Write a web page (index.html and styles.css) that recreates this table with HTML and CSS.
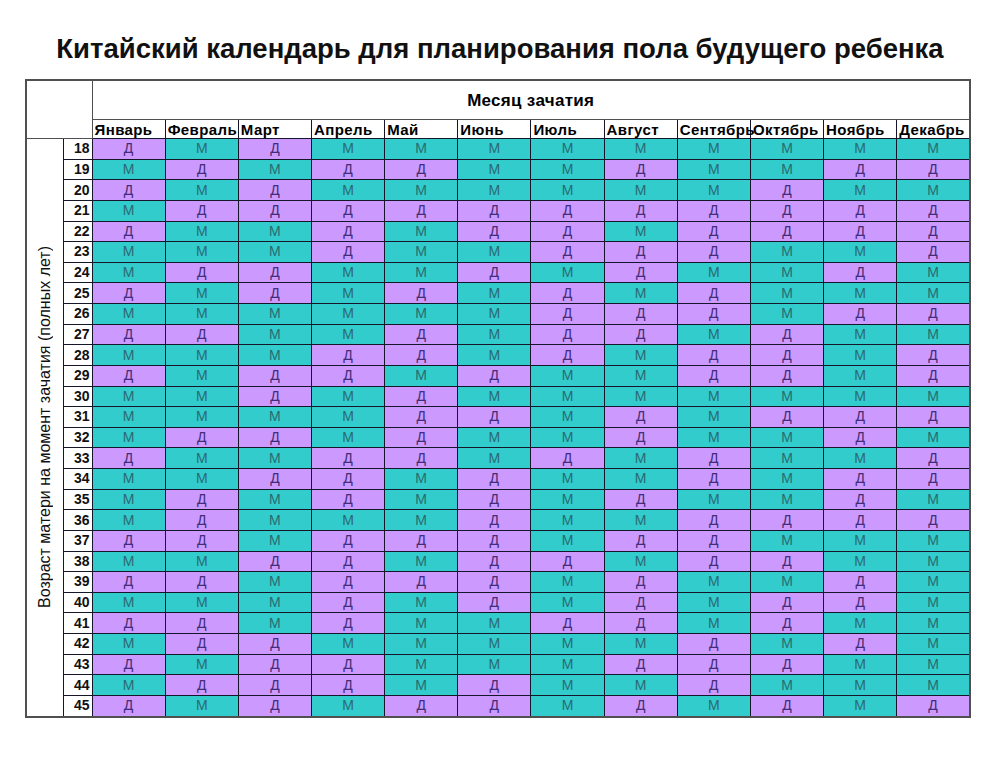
FILE: index.html
```html
<!DOCTYPE html>
<html lang="ru">
<head>
<meta charset="utf-8">
<title>Китайский календарь</title>
<link rel="stylesheet" href="styles.css">
</head>
<body>
<h1 class="title">Китайский календарь для планирования пола будущего ребенка</h1>
<table class="chart">
<colgroup>
<col class="c-label"><col class="c-num">
<col class="c-month"><col class="c-month"><col class="c-month"><col class="c-month"><col class="c-month"><col class="c-month">
<col class="c-month"><col class="c-month"><col class="c-month"><col class="c-month"><col class="c-month"><col class="c-month">
</colgroup>
<tr class="h1">
<td class="corner" colspan="2" rowspan="2"></td>
<td class="month-title" colspan="12">Месяц зачатия</td>
</tr>
<tr class="h2">
<td class="mh">Январь</td><td class="mh">Февраль</td><td class="mh">Март</td><td class="mh">Апрель</td><td class="mh">Май</td><td class="mh">Июнь</td><td class="mh">Июль</td><td class="mh">Август</td><td class="mh">Сентябрь</td><td class="mh">Октябрь</td><td class="mh">Ноябрь</td><td class="mh">Декабрь</td>
</tr>
<tr><td class="label" rowspan="28"><div class="vert">Возраст матери на момент зачатия (полных лет)</div></td><td class="num">18</td><td class="d">Д</td><td class="m">М</td><td class="d">Д</td><td class="m">М</td><td class="m">М</td><td class="m">М</td><td class="m">М</td><td class="m">М</td><td class="m">М</td><td class="m">М</td><td class="m">М</td><td class="m">М</td></tr>
<tr><td class="num">19</td><td class="m">М</td><td class="d">Д</td><td class="m">М</td><td class="d">Д</td><td class="d">Д</td><td class="m">М</td><td class="m">М</td><td class="d">Д</td><td class="m">М</td><td class="m">М</td><td class="d">Д</td><td class="d">Д</td></tr>
<tr><td class="num">20</td><td class="d">Д</td><td class="m">М</td><td class="d">Д</td><td class="m">М</td><td class="m">М</td><td class="m">М</td><td class="m">М</td><td class="m">М</td><td class="m">М</td><td class="d">Д</td><td class="m">М</td><td class="m">М</td></tr>
<tr><td class="num">21</td><td class="m">М</td><td class="d">Д</td><td class="d">Д</td><td class="d">Д</td><td class="d">Д</td><td class="d">Д</td><td class="d">Д</td><td class="d">Д</td><td class="d">Д</td><td class="d">Д</td><td class="d">Д</td><td class="d">Д</td></tr>
<tr><td class="num">22</td><td class="d">Д</td><td class="m">М</td><td class="m">М</td><td class="d">Д</td><td class="m">М</td><td class="d">Д</td><td class="d">Д</td><td class="m">М</td><td class="d">Д</td><td class="d">Д</td><td class="d">Д</td><td class="d">Д</td></tr>
<tr><td class="num">23</td><td class="m">М</td><td class="m">М</td><td class="m">М</td><td class="d">Д</td><td class="m">М</td><td class="m">М</td><td class="d">Д</td><td class="d">Д</td><td class="d">Д</td><td class="m">М</td><td class="m">М</td><td class="d">Д</td></tr>
<tr><td class="num">24</td><td class="m">М</td><td class="d">Д</td><td class="d">Д</td><td class="m">М</td><td class="m">М</td><td class="d">Д</td><td class="m">М</td><td class="d">Д</td><td class="m">М</td><td class="m">М</td><td class="d">Д</td><td class="m">М</td></tr>
<tr><td class="num">25</td><td class="d">Д</td><td class="m">М</td><td class="d">Д</td><td class="m">М</td><td class="d">Д</td><td class="m">М</td><td class="d">Д</td><td class="m">М</td><td class="d">Д</td><td class="m">М</td><td class="m">М</td><td class="m">М</td></tr>
<tr><td class="num">26</td><td class="m">М</td><td class="m">М</td><td class="m">М</td><td class="m">М</td><td class="m">М</td><td class="m">М</td><td class="d">Д</td><td class="d">Д</td><td class="d">Д</td><td class="m">М</td><td class="d">Д</td><td class="d">Д</td></tr>
<tr><td class="num">27</td><td class="d">Д</td><td class="d">Д</td><td class="m">М</td><td class="m">М</td><td class="d">Д</td><td class="m">М</td><td class="d">Д</td><td class="d">Д</td><td class="m">М</td><td class="d">Д</td><td class="m">М</td><td class="m">М</td></tr>
<tr><td class="num">28</td><td class="m">М</td><td class="m">М</td><td class="m">М</td><td class="d">Д</td><td class="d">Д</td><td class="m">М</td><td class="d">Д</td><td class="m">М</td><td class="d">Д</td><td class="d">Д</td><td class="m">М</td><td class="d">Д</td></tr>
<tr><td class="num">29</td><td class="d">Д</td><td class="m">М</td><td class="d">Д</td><td class="d">Д</td><td class="m">М</td><td class="d">Д</td><td class="m">М</td><td class="m">М</td><td class="d">Д</td><td class="d">Д</td><td class="m">М</td><td class="d">Д</td></tr>
<tr><td class="num">30</td><td class="m">М</td><td class="m">М</td><td class="d">Д</td><td class="m">М</td><td class="d">Д</td><td class="m">М</td><td class="m">М</td><td class="m">М</td><td class="m">М</td><td class="m">М</td><td class="m">М</td><td class="m">М</td></tr>
<tr><td class="num">31</td><td class="m">М</td><td class="m">М</td><td class="m">М</td><td class="m">М</td><td class="d">Д</td><td class="d">Д</td><td class="m">М</td><td class="d">Д</td><td class="m">М</td><td class="d">Д</td><td class="d">Д</td><td class="d">Д</td></tr>
<tr><td class="num">32</td><td class="m">М</td><td class="d">Д</td><td class="d">Д</td><td class="m">М</td><td class="d">Д</td><td class="m">М</td><td class="m">М</td><td class="d">Д</td><td class="m">М</td><td class="m">М</td><td class="d">Д</td><td class="m">М</td></tr>
<tr><td class="num">33</td><td class="d">Д</td><td class="m">М</td><td class="m">М</td><td class="d">Д</td><td class="d">Д</td><td class="m">М</td><td class="d">Д</td><td class="m">М</td><td class="d">Д</td><td class="m">М</td><td class="m">М</td><td class="d">Д</td></tr>
<tr><td class="num">34</td><td class="m">М</td><td class="m">М</td><td class="d">Д</td><td class="d">Д</td><td class="m">М</td><td class="d">Д</td><td class="m">М</td><td class="m">М</td><td class="d">Д</td><td class="m">М</td><td class="d">Д</td><td class="d">Д</td></tr>
<tr><td class="num">35</td><td class="m">М</td><td class="d">Д</td><td class="m">М</td><td class="d">Д</td><td class="m">М</td><td class="d">Д</td><td class="m">М</td><td class="d">Д</td><td class="m">М</td><td class="m">М</td><td class="d">Д</td><td class="m">М</td></tr>
<tr><td class="num">36</td><td class="m">М</td><td class="d">Д</td><td class="m">М</td><td class="m">М</td><td class="m">М</td><td class="d">Д</td><td class="m">М</td><td class="m">М</td><td class="d">Д</td><td class="d">Д</td><td class="d">Д</td><td class="d">Д</td></tr>
<tr><td class="num">37</td><td class="d">Д</td><td class="d">Д</td><td class="m">М</td><td class="d">Д</td><td class="d">Д</td><td class="d">Д</td><td class="m">М</td><td class="d">Д</td><td class="d">Д</td><td class="m">М</td><td class="m">М</td><td class="m">М</td></tr>
<tr><td class="num">38</td><td class="m">М</td><td class="m">М</td><td class="d">Д</td><td class="d">Д</td><td class="m">М</td><td class="d">Д</td><td class="d">Д</td><td class="m">М</td><td class="d">Д</td><td class="d">Д</td><td class="m">М</td><td class="m">М</td></tr>
<tr><td class="num">39</td><td class="d">Д</td><td class="d">Д</td><td class="m">М</td><td class="d">Д</td><td class="d">Д</td><td class="d">Д</td><td class="m">М</td><td class="d">Д</td><td class="m">М</td><td class="m">М</td><td class="d">Д</td><td class="m">М</td></tr>
<tr><td class="num">40</td><td class="m">М</td><td class="m">М</td><td class="m">М</td><td class="d">Д</td><td class="m">М</td><td class="d">Д</td><td class="m">М</td><td class="d">Д</td><td class="m">М</td><td class="d">Д</td><td class="d">Д</td><td class="m">М</td></tr>
<tr><td class="num">41</td><td class="d">Д</td><td class="d">Д</td><td class="m">М</td><td class="d">Д</td><td class="m">М</td><td class="m">М</td><td class="d">Д</td><td class="d">Д</td><td class="m">М</td><td class="d">Д</td><td class="m">М</td><td class="m">М</td></tr>
<tr><td class="num">42</td><td class="m">М</td><td class="d">Д</td><td class="d">Д</td><td class="m">М</td><td class="m">М</td><td class="m">М</td><td class="m">М</td><td class="m">М</td><td class="d">Д</td><td class="m">М</td><td class="d">Д</td><td class="m">М</td></tr>
<tr><td class="num">43</td><td class="d">Д</td><td class="m">М</td><td class="d">Д</td><td class="d">Д</td><td class="m">М</td><td class="m">М</td><td class="m">М</td><td class="d">Д</td><td class="d">Д</td><td class="d">Д</td><td class="m">М</td><td class="m">М</td></tr>
<tr><td class="num">44</td><td class="m">М</td><td class="d">Д</td><td class="d">Д</td><td class="d">Д</td><td class="m">М</td><td class="d">Д</td><td class="m">М</td><td class="m">М</td><td class="d">Д</td><td class="m">М</td><td class="m">М</td><td class="m">М</td></tr>
<tr><td class="num">45</td><td class="d">Д</td><td class="m">М</td><td class="d">Д</td><td class="m">М</td><td class="d">Д</td><td class="d">Д</td><td class="m">М</td><td class="d">Д</td><td class="m">М</td><td class="d">Д</td><td class="m">М</td><td class="d">Д</td></tr>
</table>
</body>
</html>
```
FILE: styles.css
```css
html, body {
  margin: 0;
  padding: 0;
  background: #ffffff;
}
body {
  font-family: "Liberation Sans", Arial, sans-serif;
  color: #000;
}
.title {
  margin: 0;
  padding-top: 33px;
  height: 46px;
  line-height: 32px;
  font-size: 27.5px;
  font-weight: bold;
  text-align: center;
  color: #111;
}
.chart {
  margin-left: 25px;
  border-collapse: collapse;
  table-layout: fixed;
  width: 945px;
  border: 2px solid #505050;
}
.c-label { width: 37px; }
.c-num { width: 29px; }
.c-month { width: 73.17px; }
.chart td {
  border: 1px solid #16162a;
  padding: 0;
  height: 19.64px;
  font-size: 14px;
  line-height: 17px;
  text-align: center;
  overflow: visible;
  white-space: nowrap;
}
.chart .h1 td {
  height: 37px;
}
.chart .h2 td {
  height: 18px;
}
.chart .corner {
  background: #fff;
  border-color: #505050;
}
.chart .month-title {
  font-size: 17px;
  letter-spacing: 0.3px;
  font-weight: bold;
  text-align: center;
  vertical-align: middle;
  padding-top: 1px;
  border-color: #505050;
}
.chart .mh {
  font-size: 15px;
  letter-spacing: 0.4px;
  font-weight: bold;
  text-align: left;
  padding-left: 2px;
  vertical-align: bottom;
  line-height: 17px;
  border-top-color: #505050;
}
.chart .label {
  background: #fff;
  vertical-align: middle;
  text-align: center;
}
.vert {
  writing-mode: vertical-rl;
  transform: rotate(180deg);
  font-size: 16px;
  line-height: 18px;
  margin: 0 auto;
  color: #111;
}
.chart .num {
  background: #fff;
  font-size: 14px;
  font-weight: bold;
  text-align: right;
  padding-right: 2px;
  color: #111;
}
.chart .m {
  background: #33cccc;
  color: #2a6a72;
}
.chart .d {
  background: #cc99ff;
  color: #432c78;
}
```
